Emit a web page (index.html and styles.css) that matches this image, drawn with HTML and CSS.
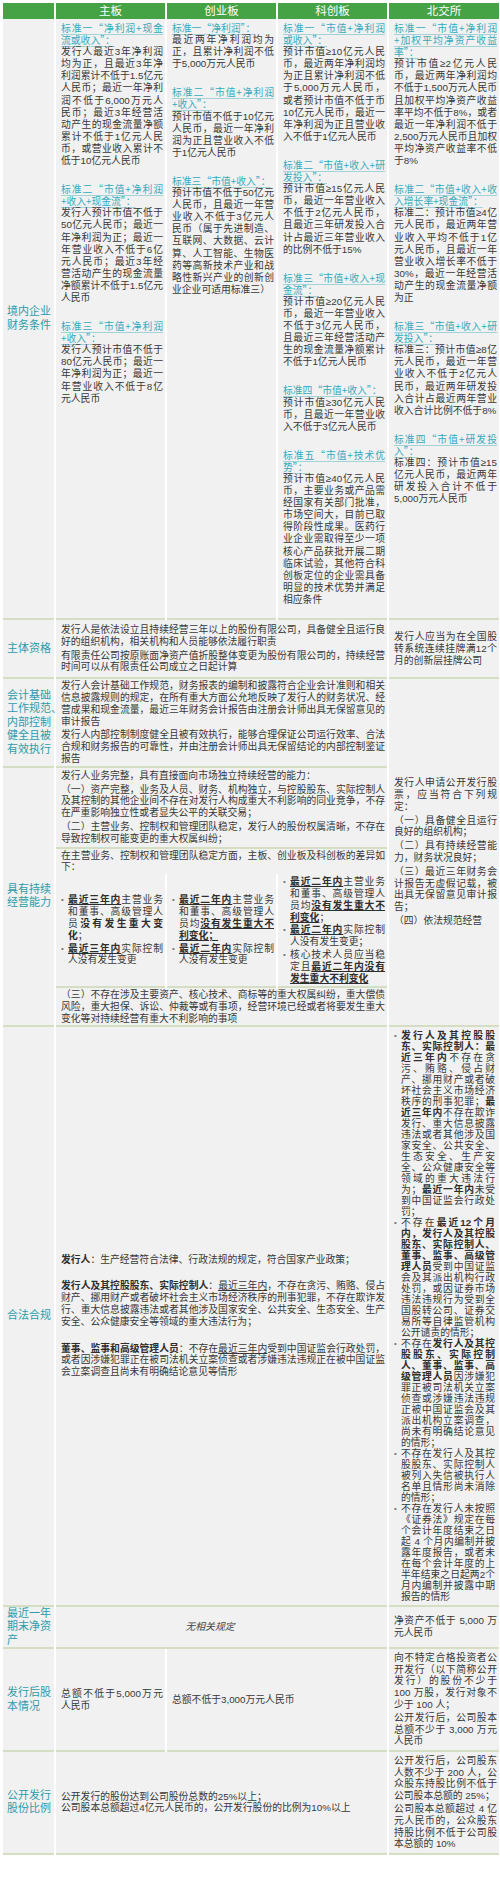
FILE: index.html
```html
<!DOCTYPE html>
<html lang="zh-CN">
<head>
<meta charset="utf-8">
<title>上市条件对比</title>
<link rel="stylesheet" href="styles.css">
</head>
<body>
<table class="cmp">
<colgroup><col class="c-label"><col class="c-col"><col class="c-col"><col class="c-col"><col class="c-col"></colgroup>
<thead>
<tr><th></th><th>主板</th><th>创业板</th><th>科创板</th><th>北交所</th></tr>
</thead>
<tbody>
<tr class="r-fin">
<th class="lbl">境内企业<br>财务条件</th>
<td class="std">
<p class="std-t">标准一“净利润+现金流或收入”：</p>
<p>发行人最近3年净利润均为正，且最近3年净利润累计不低于1.5亿元人民币；最近一年净利润不低于6,000万元人民币；最近3年经营活动产生的现金流量净额累计不低于1亿元人民币，或营业收入累计不低于10亿元人民币</p>
<p class="std-t">标准二“市值+净利润+收入+现金流”：</p>
<p>发行人预计市值不低于50亿元人民币；最近一年净利润为正；最近一年营业收入不低于6亿元人民币；最近3年经营活动产生的现金流量净额累计不低于1.5亿元人民币</p>
<p class="std-t">标准三“市值+净利润+收入”：</p>
<p>发行人预计市值不低于80亿元人民币；最近一年净利润为正；最近一年营业收入不低于8亿元人民币</p>
</td>
<td class="std">
<p class="std-t">标准一“净利润”：</p>
<p>最近两年净利润均为正，且累计净利润不低于5,000万元人民币</p>
<p class="std-t">标准二“市值+净利润+收入”：</p>
<p>预计市值不低于10亿元人民币，最近一年净利润为正且营业收入不低于1亿元人民币</p>
<p class="std-t">标准三“市值+收入”：</p>
<p>预计市值不低于50亿元人民币，且最近一年营业收入不低于3亿元人民币（属于先进制造、互联网、大数据、云计算、人工智能、生物医药等高新技术产业和战略性新兴产业的创新创业企业可适用标准三）</p>
</td>
<td class="std">
<p class="std-t">标准一“市值+净利润或收入”：</p>
<p>预计市值≥10亿元人民币，最近两年净利润均为正且累计净利润不低于5,000万元人民币，或者预计市值不低于币10亿元人民币，最近一年净利润为正且营业收入不低于1亿元人民币</p>
<p class="std-t">标准二“市值+收入+研发投入”：</p>
<p>预计市值≥15亿元人民币，最近一年营业收入不低于2亿元人民币，且最近三年研发投入合计占最近三年营业收入的比例不低于15%</p>
<p class="std-t">标准三“市值+收入+现金流”：</p>
<p>预计市值≥20亿元人民币，最近一年营业收入不低于3亿元人民币，且最近三年经营活动产生的现金流量净额累计不低于1亿元人民币</p>
<p class="std-t">标准四“市值+收入”：</p>
<p>预计市值≥30亿元人民币，且最近一年营业收入不低于3亿元人民币</p>
<p class="std-t">标准五“市值+技术优势”：</p>
<p>预计市值≥40亿元人民币，主要业务或产品需经国家有关部门批准，市场空间大，目前已取得阶段性成果。医药行业企业需取得至少一项核心产品获批开展二期临床试验，其他符合科创板定位的企业需具备明显的技术优势并满足相应条件</p>
</td>
<td class="std">
<p class="std-t">标准一“市值+净利润+加权平均净资产收益率”：</p>
<p>预计市值≥2亿元人民币，最近两年净利润均不低于1,500万元人民币且加权平均净资产收益率平均不低于8%，或者最近一年净利润不低于2,500万元人民币且加权平均净资产收益率不低于8%</p>
<p class="std-t">标准二“市值+收入+收入增长率+现金流”：</p>
<p>标准二：预计市值≥4亿元人民币，最近两年营业收入平均不低于1亿元人民币，且最近一年营业收入增长率不低于30%，最近一年经营活动产生的现金流量净额为正</p>
<p class="std-t">标准三“市值+收入+研发投入”：</p>
<p>标准三：预计市值≥8亿元人民币，最近一年营业收入不低于2亿元人民币，最近两年研发投入合计占最近两年营业收入合计比例不低于8%</p>
<p class="std-t">标准四“市值+研发投入”：</p>
<p>标准四：预计市值≥15亿元人民币，最近两年研发投入合计不低于5,000万元人民币</p>
</td>
</tr>

<tr class="r-subj">
<th class="lbl">主体资格</th>
<td colspan="3" class="para">
<p>发行人是依法设立且持续经营三年以上的股份有限公司，具备健全且运行良好的组织机构，相关机构和人员能够依法履行职责</p>
<p>有限责任公司按原账面净资产值折股整体变更为股份有限公司的，持续经营时间可以从有限责任公司成立之日起计算</p>
</td>
<td class="para"><p>发行人应当为在全国股转系统连续挂牌满12个月的创新层挂牌公司</p></td>
</tr>

<tr class="r-acct">
<th class="lbl">会计基础<br>工作规范、<br>内部控制<br>健全且被<br>有效执行</th>
<td colspan="3" class="para">
<p>发行人会计基础工作规范，财务报表的编制和披露符合企业会计准则和相关信息披露规则的规定，在所有重大方面公允地反映了发行人的财务状况、经营成果和现金流量，最近三年财务会计报告由注册会计师出具无保留意见的审计报告</p>
<p>发行人内部控制制度健全且被有效执行，能够合理保证公司运行效率、合法合规和财务报告的可靠性，并由注册会计师出具无保留结论的内部控制鉴证报告</p>
</td>
<td rowspan="5" class="para">
<p>发行人申请公开发行股票，应当符合下列规定：</p>
<p>（一）具备健全且运行良好的组织机构；</p>
<p>（二）具有持续经营能力，财务状况良好；</p>
<p>（三）最近三年财务会计报告无虚假记载，被出具无保留意见审计报告；</p>
<p>（四）依法规范经营</p>
</td>
</tr>

<tr class="r-intro">
<th class="lbl" rowspan="4">具有持续<br>经营能力</th>
<td colspan="3" class="para">
<p>发行人业务完整，具有直接面向市场独立持续经营的能力：</p>
<p>（一）资产完整，业务及人员、财务、机构独立，与控股股东、实际控制人及其控制的其他企业间不存在对发行人构成重大不利影响的同业竞争，不存在严重影响独立性或者显失公平的关联交易；</p>
<p>（二）主营业务、控制权和管理团队稳定，发行人的股份权属清晰，不存在导致控制权可能变更的重大权属纠纷；</p>
</td>
</tr>
<tr class="r-note">
<td colspan="3">在主营业务、控制权和管理团队稳定方面，主板、创业板及科创板的差异如下：</td>
</tr>
<tr class="r-diff">
<td>
<ul class="dots">
<li><span><b class="u">最近三年内</b>主营业务和董事、高级管理人员<b>没有发生重大变化</b>；</span></li>
<li><span><b class="u">最近三年内</b>实际控制人没有发生变更</span></li>
</ul>
</td>
<td>
<ul class="dots">
<li><span><b class="u">最近二年内</b>主营业务和董事、高级管理人员均<b class="u">没有发生重大不利变化；</b></span></li>
<li><span><b class="u">最近二年内</b>实际控制人没有发生变更</span></li>
</ul>
</td>
<td>
<ul class="dots">
<li><span><b class="u">最近二年内</b>主营业务和董事、高级管理人员均<b class="u">没有发生重大不利变化</b>；</span></li>
<li><span><b class="u">最近二年内</b>实际控制人没有发生变更；</span></li>
<li><span>核心技术人员应当稳定且<b class="u">最近二年内没有发生重大不利变化</b></span></li>
</ul>
</td>
</tr>
<tr class="r-three">
<td colspan="3">（三）不存在涉及主要资产、核心技术、商标等的重大权属纠纷，重大偿债风险，重大担保、诉讼、仲裁等或有事项，经营环境已经或者将要发生重大变化等对持续经营有重大不利影响的事项</td>
</tr>

<tr>
<th class="lbl">合法合规</th>
<td colspan="3" class="law">
<p><b>发行人</b>：生产经营符合法律、行政法规的规定，符合国家产业政策；</p>
<p><b>发行人及其控股股东、实际控制人</b>：<u>最近三年内</u>，不存在贪污、贿赂、侵占财产、挪用财产或者破坏社会主义市场经济秩序的刑事犯罪，不存在欺诈发行、重大信息披露违法或者其他涉及国家安全、公共安全、生态安全、生产安全、公众健康安全等领域的重大违法行为；</p>
<p><b>董事、监事和高级管理人员</b>：不存在<u>最近三年内</u>受到中国证监会行政处罚，或者因涉嫌犯罪正在被司法机关立案侦查或者涉嫌违法违规正在被中国证监会立案调查且尚未有明确结论意见等情形</p>
</td>
<td class="bj">
<ul class="dots">
<li><span><b>发行人及其控股股东、实际控制人：最近三年内</b>不存在贪污、贿赂、侵占财产、挪用财产或者破坏社会主义市场经济秩序的刑事犯罪；<b>最近三年内</b>不存在欺诈发行、重大信息披露违法或者其他涉及国家安全、公共安全、生态安全、生产安全、公众健康安全等领域的重大违法行为；<b>最近一年内</b>未受到中国证监会行政处罚；</span></li>
<li><span>不存在<b>最近12个月内，发行人及其控股股东、实际控制人、董事、监事、高级管理人员</b>受到中国证监会及其派出机构行政处罚，或因证券市场违法违规行为受到全国股转公司、证券交易所等自律监管机构公开谴责的情形；</span></li>
<li><span>不存在<b>发行人及其控股股东、实际控制人、董事、监事、高级管理人员</b>因涉嫌犯罪正被司法机关立案侦查或涉嫌违法违规正被中国证监会及其派出机构立案调查，尚未有明确结论意见的情形；</span></li>
<li><span>不存在发行人及其控股股东、实际控制人被列入失信被执行人名单且情形尚未消除的情形；</span></li>
<li><span>不存在发行人未按照《证券法》规定在每个会计年度结束之日起 4 个月内编制并披露年度报告，或者未在每个会计年度的上半年结束之日起两2个月内编制并披露中期报告的情形</span></li>
</ul>
</td>
</tr>

<tr class="r-tail">
<th class="lbl">最近一年<br>期末净资<br>产</th>
<td colspan="3" class="none">无相关规定</td>
<td>净资产不低于 5,000 万元人民币</td>
</tr>

<tr class="r-tail">
<th class="lbl">发行后股<br>本情况</th>
<td>总额不低于5,000万元人民币</td>
<td colspan="2">总额不低于3,000万元人民币</td>
<td class="para">
<p>向不特定合格投资者公开发行（以下简称公开发行）的股份不少于 100 万股，发行对象不少于 100 人；</p>
<p>公开发行后，公司股本总额不少于 3,000 万元人民币</p>
</td>
</tr>

<tr class="r-tail">
<th class="lbl">公开发行<br>股份比例</th>
<td colspan="3">
<p>公开发行的股份达到公司股份总数的25%以上；</p>
<p>公司股本总额超过4亿元人民币的，公开发行股份的比例为10%以上</p>
</td>
<td class="para">
<p>公开发行后，公司股东人数不少于 200 人，公众股东持股比例不低于公司股本总额的 25%；</p>
<p>公司股本总额超过 4 亿元人民币的，公众股东持股比例不低于公司股本总额的 10%</p>
</td>
</tr>
</tbody>
</table>
</body>
</html>
```
FILE: styles.css
```css
* { box-sizing: border-box; }
html, body { margin: 0; background: #fff; }
body {
  padding: 3px 1px 6px 3px;
  font-family: "Liberation Sans", "Noto Sans CJK SC", sans-serif;
  color: #383838;
}
.cmp {
  border-collapse: collapse;
  table-layout: fixed;
  width: 496px;
  font-size: 9.8px;
  line-height: 11.8px;
  border-bottom: 2px solid #d3dec2;
}
.c-label { width: 52px; }
.c-col { width: 111px; }

thead th {
  background: #45a245;
  color: #fff;
  font-weight: normal;
  font-size: 11.5px;
  height: 16px;
  line-height: 16px;
  padding: 0;
  text-align: center;
  border-left: 2px solid #fff;
}
thead th:first-child { border-left: 0; }

tbody td, tbody th {
  background: #f1f1f1;
  vertical-align: middle;
  border-left: 2px solid #fff;
  border-top: 2px solid #d3dec2;
  padding: 3px 2px 3px 5px;
  text-align: justify;
  font-weight: normal;
}
tbody th.lbl {
  border-left: 0;
  color: #2b9cab;
  font-size: 11px;
  line-height: 13.5px;
  text-align: left;
  white-space: nowrap;
  padding: 0 1px 0 4px;
}
.r-fin > td, .r-fin > th { border-top: 0; }
.r-fin > td { vertical-align: top; padding-top: 3px; padding-bottom: 12px; line-height: 12.1px; }

p { margin: 0; }
.std .std-t {
  font-family: "Noto Sans CJK SC", "Liberation Sans", sans-serif;
  color: #33abbd;
  text-decoration: underline;
  text-decoration-color: #a3d2d9;
  text-underline-offset: 2px;
}
.std p + .std-t { margin-top: 16px; }

.para p + p { margin-top: 2px; }
.r-subj > td { padding-top: 4px; padding-bottom: 4px; }
.r-acct > td { padding-top: 1px; padding-bottom: 1px; }

.r-intro > td { padding-top: 2px; padding-bottom: 2px; }
.r-note > td { padding-top: 1px; padding-bottom: 1px; }
.r-diff > td { border-top: 0; padding-top: 2px; padding-bottom: 2px; }
.r-three > td { padding-top: 1px; padding-bottom: 0; }

.dots {
  margin: 0;
  padding: 0;
  list-style: none;
}
.dots li {
  display: flex;
}
.dots li::before {
  content: "•";
  flex: 0 0 7px;
  color: #777;
  font-size: 8px;
}
.dots li > span { flex: 1 1 auto; min-width: 0; }
.dots li + li { margin-top: 1px; }

b { font-weight: bold; color: #2e2e2e; }
.u { text-decoration: underline; text-underline-offset: 1px; }
u { text-underline-offset: 1px; }

.law p + p { margin-top: 15px; }

td.bj { padding-right: 4px; line-height: 11px; }
td.bj .dots li + li { margin-top: 0; }

.r-tail > td { line-height: 11.6px; }

td.none {
  text-align: center;
  font-style: italic;
  padding-right: 28px;
  color: #444;
}
```
